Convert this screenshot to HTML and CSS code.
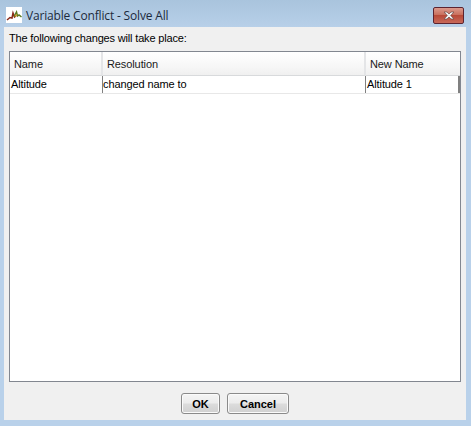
FILE: index.html
```html
<!DOCTYPE html>
<html lang="en">
<head>
<meta charset="utf-8">
<title>Variable Conflict - Solve All</title>
<link rel="stylesheet" href="styles.css">
</head>
<body>
<div class="window">
  <div class="titlebar">
    <div class="app-icon">
      <svg width="16" height="16" viewBox="0 0 16 16">
        <rect width="16" height="16" fill="#fff"/>
        <path d="M1 13 L4 10.5 L6 11 L7 6 L8.5 10 L10 9" fill="none" stroke="#8a2a1a" stroke-width="1.5"/>
        <path d="M8 9.5 L10.5 5 L11.5 9 L13 8 L15.5 10" fill="none" stroke="#5a7a20" stroke-width="1.5"/>
        <path d="M9 9.5 L11 7.5" fill="none" stroke="#d09020" stroke-width="1.2"/>
      </svg>
    </div>
    <div class="title">Variable Conflict - Solve All</div>
    <div class="close">
      <svg width="16" height="9" viewBox="0 0 16 9">
        <path d="M3 1 H6 L8 3 L10 1 H13 L9.7 4.5 L13 8 H10 L8 6 L6 8 H3 L6.3 4.5 Z" fill="#f2f2f2" stroke="#6a4a48" stroke-width=".7"/>
      </svg>
    </div>
  </div>
  <div class="content">
    <div class="message">The following changes will take place:</div>
    <div class="table">
      <div class="row header">
        <div class="col-name head-cell">Name</div>
        <div class="col-res head-cell">Resolution</div>
        <div class="col-new head-cell">New Name</div>
      </div>
      <div class="row body-row">
        <div class="col-name cell">Altitude</div>
        <div class="col-res cell cell-flush">changed name to</div>
        <div class="col-new cell last">Altitude 1</div>
      </div>
    </div>
    <div class="actions">
      <button class="btn btn-ok">OK</button>
      <button class="btn btn-cancel">Cancel</button>
    </div>
  </div>
</div>
</body>
</html>
```
FILE: styles.css
```css
* { box-sizing: border-box; }
html, body { margin: 0; padding: 0; }
body { width: 471px; height: 426px; overflow: hidden; }
.window {
  width: 471px;
  height: 426px;
  display: flex;
  flex-direction: column;
  padding: 0 5px 6px 4px;
  background: linear-gradient(180deg, #a9c4dd 0, #b9d1ea 30px, #b9d1ea 100%);
}
.titlebar {
  height: 27px;
  flex: none;
  display: flex;
  align-items: flex-start;
  position: relative;
}
.app-icon { width: 16px; height: 16px; margin: 7px 0 0 2px; }
.title {
  margin: 7px 0 0 4px;
  font: 12px/17px "Open Sans", "Liberation Sans", sans-serif;
  letter-spacing: -.17px;
  color: #1c2a3c;
}
.close {
  position: absolute;
  top: 7px;
  right: 2px;
  width: 31px;
  height: 17px;
  border: 1px solid #5c2430;
  border-radius: 2px;
  display: flex;
  align-items: center;
  justify-content: center;
  background: linear-gradient(180deg, #dc9a8c 0, #c9705e 45%, #b84a38 50%, #c8695a 100%);
}
.content {
  flex: 1;
  display: flex;
  flex-direction: column;
  background: #f0f0f0;
  padding: 0 5px 0 5px;
  min-height: 0;
}
.message {
  height: 24px;
  padding-top: 4px;
  font: 11px/15px "Liberation Sans", sans-serif;
  letter-spacing: -.17px;
  color: #000;
}
.table {
  height: 331px;
  flex: none;
  border: 1px solid #828790;
  background: #fff;
}
.row { display: grid; grid-template-columns: 93px 263px 1fr; }
.header { height: 24px; }
.head-cell {
  padding: 5px 0 0 4px;
  font: 11px/15px "Liberation Sans", sans-serif;
  letter-spacing: -.1px;
  color: #1a1a1a;
  background: linear-gradient(180deg, #fff 0, #f7f7f7 60%, #f0f0f0 100%);
  border-right: 2px solid #e4e5e7;
  border-bottom: 1px solid #d8dadc;
}
.head-cell:last-child { border-right: 0; }
.body-row { height: 18px; border-bottom: 1px solid #e8e8e8; }
.cell {
  padding: 1px 0 0 1px;
  font: 11px/15px "Liberation Sans", sans-serif;
  letter-spacing: -.1px;
  color: #000;
  border-right: 1px solid #808080;
}
.cell-flush { padding-left: 0; }
.cell.last { border-right: 2px solid #808080; }
.actions {
  flex: 1;
  display: flex;
  justify-content: center;
  align-items: flex-start;
  gap: 7px;
  padding-top: 11px;
}
.btn {
  height: 21px;
  padding: 0;
  border: 1px solid #8a8a8a;
  border-radius: 3px;
  background: linear-gradient(180deg, #f4f4f4 0, #ececec 48%, #dcdcdc 52%, #d0d0d0 100%);
  box-shadow: inset 0 0 0 1px #fafafa;
  font: bold 11px "Liberation Sans", sans-serif;
  color: #000;
}
.btn-ok { width: 39px; }
.btn-cancel { width: 62px; }
```
